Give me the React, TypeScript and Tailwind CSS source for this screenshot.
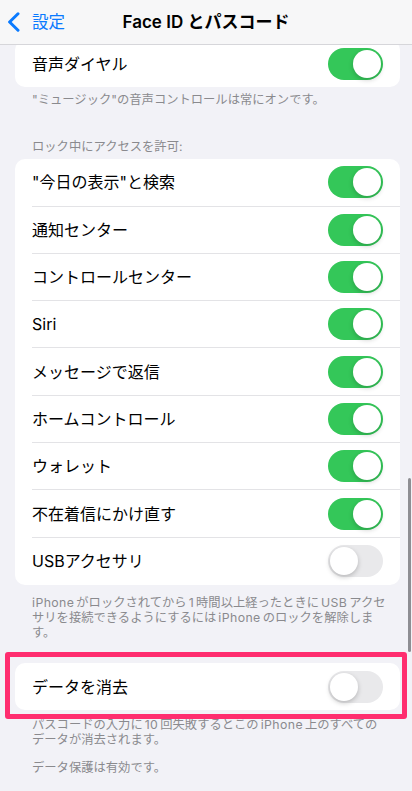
import React from "react";

const font = { fontFamily: 'Inter, "Noto Sans CJK JP", sans-serif' };

function L({ children }: { children: React.ReactNode }) {
  return <span className="mx-[2px] tracking-[0.4px]">{children}</span>;
}

function Toggle({ on }: { on: boolean }) {
  return on ? (
    <div className="flex h-[32px] w-[55px] shrink-0 items-center justify-end rounded-full bg-[#34c759] p-[2px]">
      <div className="h-[28px] w-[28px] rounded-full bg-white shadow-[0_2px_5px_rgba(0,0,0,0.2)]" />
    </div>
  ) : (
    <div className="flex h-[32px] w-[55px] shrink-0 items-center justify-start rounded-full bg-[#e9e9eb] p-[2px]">
      <div className="h-[28px] w-[28px] rounded-full bg-white shadow-[0_2px_5px_rgba(0,0,0,0.22)]" />
    </div>
  );
}

function Row({ label, on, last }: { label: string; on: boolean; last?: boolean }) {
  return (
    <div className="pl-[17px]">
      <div
        className={`flex h-[47.3px] items-center justify-between pr-[17px] ${
          last ? "" : "border-b border-[#e3e3e6]"
        }`}
      >
        <span className="text-[16px] leading-none text-black">{label}</span>
        <Toggle on={on} />
      </div>
    </div>
  );
}

const rows: [string, boolean][] = [
  ['"今日の表示"と検索', true],
  ["通知センター", true],
  ["コントロールセンター", true],
  ["Siri", true],
  ["メッセージで返信", true],
  ["ホームコントロール", true],
  ["ウォレット", true],
  ["不在着信にかけ直す", true],
  ["USBアクセサリ", false],
];

export default function App() {
  return (
    <div className="relative h-[791px] w-[412px] overflow-hidden bg-[#f2f2f7]" style={font}>
      {/* content */}
      <div className="flex flex-col pt-[40px]">
        <div className="ml-[15px] mr-[12px] overflow-hidden rounded-[10px] bg-white">
          <Row label="音声ダイヤル" on last />
        </div>
        <div className="px-[32px] pt-[5px] text-[12.3px] leading-[16px] text-[#8a8a8e] whitespace-nowrap">
          "ミュージック"の音声コントロールは常にオンです。
        </div>

        <div className="mt-[31px] px-[32px] text-[12.3px] leading-[16px] text-[#8a8a8e]">
          ロック中にアクセスを許可:
        </div>
        <div className="ml-[15px] mr-[12px] mt-[4px] overflow-hidden rounded-[10px] bg-white">
          {rows.map(([l, o], i) => (
            <Row key={l} label={l} on={o} last={i === rows.length - 1} />
          ))}
        </div>
        <div className="px-[32px] pt-[10px] text-[12.3px] leading-[15px] text-[#8a8a8e] whitespace-nowrap">
          <div>
            <span className="mr-[2px] tracking-[0.4px]">iPhone</span>がロックされてから<L>1</L>時間以上経ったときに<L>USB</L>アクセ
          </div>
          <div>
            サリを接続できるようにするには<L>iPhone</L>のロックを解除しま
          </div>
          <div>す。</div>
        </div>

        <div className="relative ml-[15px] mr-[12px] mt-[23px] rounded-[10px] bg-white">
          <Row label="データを消去" on={false} last />
          <div className="pointer-events-none absolute -bottom-[9px] -left-[10px] -right-[7px] -top-[11px] rounded-[3px] border-[5px] border-[#ff2d6f]" />
        </div>
        <div className="px-[32px] pt-[7px] text-[12.3px] leading-[15px] text-[#8a8a8e] whitespace-nowrap">
          <div>
            パスコードの入力に<L>10</L>回失敗するとこの<L>iPhone</L>上のすべての
          </div>
          <div>データが消去されます。</div>
          <div className="mt-[13px]">データ保護は有効です。</div>
        </div>
      </div>

      {/* nav bar */}
      <div className="absolute left-0 right-0 top-0 grid h-[45px] grid-cols-[1fr_auto_1fr] items-center border-b border-[#d6d6da] bg-[#f7f7f8]/95">
        <div className="flex items-center pl-[7px]">
          <svg width="13" height="20" viewBox="0 0 13 20" fill="none">
            <path d="M11 1.8 L2.6 10 L11 18.2" stroke="#0a7aff" strokeWidth="3" strokeLinecap="round" strokeLinejoin="round" />
          </svg>
          <span className="ml-[12px] text-[16.5px] leading-none text-[#0a7aff]">設定</span>
        </div>
        <div className="text-[17px] font-semibold leading-none text-black">Face ID とパスコード</div>
        <div />
      </div>

      {/* scroll indicator */}
      <div className="absolute right-[1px] top-[478px] h-[174px] w-[3px] rounded-full bg-[#8e8e93]" />
    </div>
  );
}
